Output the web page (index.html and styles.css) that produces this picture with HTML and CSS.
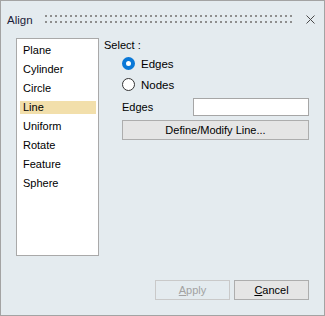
FILE: index.html
```html
<!DOCTYPE html>
<html lang="en">
<head>
  <meta charset="UTF-8">
  <title>Align</title>
  <link rel="stylesheet" href="styles.css">
</head>
<body>
  <div class="dialog">
    <div class="titlebar">
      <span class="title">Align</span>
      <span class="grip"></span>
      <svg class="close" width="9" height="9" viewBox="0 0 9 9">
        <path d="M0.5 0.5 L8.5 8.5 M8.5 0.5 L0.5 8.5" stroke="#4a4a4a" stroke-width="1" fill="none"/>
      </svg>
    </div>

    <div class="content">
      <ul class="listbox">
        <li>Plane</li>
        <li>Cylinder</li>
        <li>Circle</li>
        <li class="selected">Line</li>
        <li>Uniform</li>
        <li>Rotate</li>
        <li>Feature</li>
        <li>Sphere</li>
      </ul>

      <div class="panel">
        <div class="caption">Select :</div>
        <div class="radios">
          <label class="radio"><span class="dot checked"></span>Edges</label>
          <label class="radio"><span class="dot"></span>Nodes</label>
        </div>
        <div class="field">
          <span class="field-label">Edges</span>
          <input type="text" class="textbox">
        </div>
        <button class="btn wide">Define/Modify Line...</button>
      </div>
    </div>

    <div class="footer">
      <button class="btn disabled"><u>A</u>pply</button>
      <button class="btn"><u>C</u>ancel</button>
    </div>
  </div>
</body>
</html>
```

FILE: styles.css
```css
* {
  box-sizing: border-box;
}

body {
  margin: 0;
  font-family: "Liberation Sans", Arial, sans-serif;
  font-size: 11px;
  color: #000;
}

.dialog {
  width: 325px;
  height: 316px;
  border: 1px solid #a3a3a3;
  background: #e4ebef;
  display: flex;
  flex-direction: column;
}

.titlebar {
  height: 37px;
  display: flex;
  align-items: center;
  padding: 0 9px 0 6px;
}

.title {
  color: #1c1c3a;
  font-size: 11.5px;
  width: 38px;
}

.grip {
  width: 248px;
  height: 8px;
  background-image:
    linear-gradient(to right, #8e8e8e 2px, transparent 2px),
    linear-gradient(to right, #8e8e8e 2px, transparent 2px);
  background-size: 5px 2px, 5px 2px;
  background-position: 0 0, 0 6px;
  background-repeat: repeat-x;
  margin-top: -1px;
}

.close {
  margin-left: auto;
}

.content {
  flex: 1;
  display: flex;
  padding: 0 15px;
}

.listbox {
  list-style: none;
  margin: 0;
  padding: 5px 2px 0 3px;
  width: 83px;
  height: 218px;
  background: #fff;
  border: 1px solid #a9a9a9;
}

.listbox li {
  height: 13px;
  line-height: 13px;
  margin-bottom: 6px;
  padding-left: 3px;
}

.listbox li.selected {
  background: #f2dfab;
}

.panel {
  flex: 1;
  margin-left: 5px;
}

.caption {
  height: 14px;
  line-height: 14px;
}

.radios {
  padding-left: 18px;
  margin-top: 1px;
}

.radio {
  display: flex;
  align-items: center;
  height: 21px;
  font-size: 11.5px;
}

.dot {
  width: 13px;
  height: 13px;
  border-radius: 50%;
  border: 1px solid #333;
  background: #fff;
  margin-right: 6px;
}

.dot.checked {
  border: 4px solid #0a78d7;
  background: #fff;
}

.field {
  display: flex;
  align-items: center;
  justify-content: space-between;
  margin: 3px 0 0 18px;
}

.textbox {
  width: 116px;
  height: 18px;
  border: 1px solid #a6a6a6;
  background: #fff;
  margin: 0;
  padding: 0 3px;
  font: inherit;
}

.btn {
  height: 20px;
  width: 75px;
  padding: 0;
  border: 1px solid #adadad;
  background: #e5e5e5;
  font: inherit;
  color: #000;
}

.btn.wide {
  display: block;
  width: 187px;
  margin: 4px 0 0 18px;
}

.btn.disabled {
  color: #a2a2a2;
  border-color: #c9c9c9;
  background: #e4ebef;
}

.footer {
  display: flex;
  justify-content: flex-end;
  gap: 4px;
  padding: 0 15px 15px 0;
}
```
